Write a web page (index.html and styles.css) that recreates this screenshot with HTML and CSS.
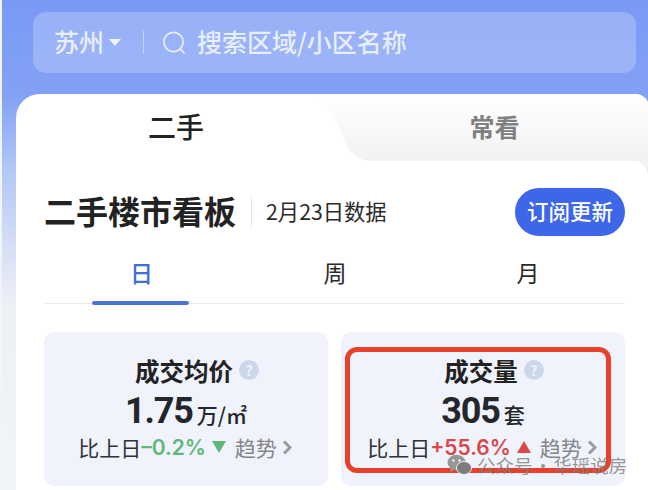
FILE: index.html
```html
<!DOCTYPE html>
<html lang="zh-CN">
<head>
    <meta charset="UTF-8">
    <title>二手楼市看板</title>
    <link rel="stylesheet" href="styles.css">
</head>
<body>
    <div class="search-bar">
        <div class="city">苏州<span class="caret"></span></div>
        <div class="search-divider"></div>
        <svg class="search-icon" width="24" height="24" viewBox="0 0 24 24" fill="none" stroke="#e6edfd" stroke-width="1.8" stroke-linecap="round">
            <circle cx="11.5" cy="11" r="9.6"/>
            <path d="M18.5 18.2 22 22"/>
        </svg>
        <div class="search-text">搜索区域/小区名称</div>
    </div>

    <div class="card">
        <svg class="tab-shape" width="332" height="92" viewBox="0 0 332 92">
            <defs>
                <linearGradient id="tabFill" x1="0" y1="0" x2="0" y2="1">
                    <stop offset="0" stop-color="#ffffff"/>
                    <stop offset="1" stop-color="#f2f2f4"/>
                </linearGradient>
            </defs>
            <path d="M0 0H318Q328 0 332 8V67H58C40 67 33 58 27 42C21 28 10 10 0 0Z" fill="url(#tabFill)"/>
            <path d="M322 67H332V81Q330 71 322 67Z" fill="#f2f2f4"/>
        </svg>
        <div class="tab-row">
            <div class="tab tab-active">二手</div>
            <div class="tab tab-other">常看</div>
        </div>

        <div class="board-head">
            <h1 class="board-title">二手楼市看板</h1>
            <div class="board-date">2月23日数据</div>
            <button class="subscribe-btn">订阅更新</button>
        </div>

        <div class="period-tabs">
            <div class="period period-active">日</div>
            <div class="period">周</div>
            <div class="period">月</div>
        </div>

        <div class="stat-grid">
            <div class="stat">
                <div class="stat-title">成交均价<span class="help">?</span></div>
                <div class="stat-value">1.75<span class="stat-unit">万/㎡</span></div>
                <div class="stat-row">
                    <span>比上日</span><span class="down">–0.2%</span><span class="tri tri-down"></span>
                    <span class="trend">趋势</span>
                    <svg class="chevron" width="10" height="15" viewBox="0 0 10 15" fill="none" stroke="#9a9a9e" stroke-width="3"><path d="M2 1.500 8 7.500 2 13.500"/></svg>
                </div>
            </div>
            <div class="stat">
                <div class="stat-title">成交量<span class="help">?</span></div>
                <div class="stat-value">305<span class="stat-unit">套</span></div>
                <div class="stat-row">
                    <span>比上日</span><span class="up">+55.6%</span><span class="tri tri-up"></span>
                    <span class="trend">趋势</span>
                    <svg class="chevron" width="10" height="15" viewBox="0 0 10 15" fill="none" stroke="#9a9a9e" stroke-width="3"><path d="M2 1.500 8 7.500 2 13.500"/></svg>
                </div>
                <div class="highlight"></div>
            </div>
        </div>
    </div>

    <div class="watermark">
        <svg width="25" height="22" viewBox="0 0 25 22">
            <ellipse cx="9.500" cy="8.500" rx="9" ry="7.800" fill="#979797"/>
            <path d="M4 13 3 18 8.500 15Z" fill="#979797"/>
            <circle cx="6.500" cy="6.500" r="1.200" fill="#eef1fb"/>
            <circle cx="12.500" cy="6.500" r="1.200" fill="#eef1fb"/>
            <ellipse cx="17" cy="14" rx="7.500" ry="6.500" fill="#7c7c7c" stroke="#eef1fb" stroke-width="1"/>
        </svg>
        <span>公众号 · 华瑶说房</span>
    </div>
</body>
</html>
```

FILE: styles.css
```css
* {
    margin: 0;
    padding: 0;
    box-sizing: border-box;
}

html, body {
    height: 490px;
    overflow: hidden;
}

body {
    position: relative;
    font-family: "Noto Sans CJK SC", "Noto Sans", sans-serif;
    background: linear-gradient(180deg, #7a99f5 0%, #83a2f5 20%, #b3c8f5 35%, #eef0f6 62%, #f3f4f8 100%);
    border-left: 2px solid #f2f4fb;
    color: #222;
}

.search-bar {
    display: flex;
    align-items: center;
    height: 61px;
    margin: 12px 12px 21px 31px;
    padding-left: 21px;
    border-radius: 13px;
    background: rgba(255, 255, 255, 0.22);
    color: #e8eefd;
}

.city {
    display: flex;
    align-items: center;
    padding-bottom: 3px;
    font-size: 25px;
    font-weight: 500;
}

.caret {
    width: 0;
    height: 0;
    margin-left: 5px;
    margin-top: 3px;
    border-left: 6px solid transparent;
    border-right: 6px solid transparent;
    border-top: 7px solid #eef3fe;
}

.search-divider {
    width: 1px;
    height: 23px;
    margin: 0 18px 0 22px;
    background: #c6d5fa;
}

.search-icon {
    flex-shrink: 0;
}

.search-text {
    margin-left: 11px;
    padding-bottom: 3px;
    font-size: 25px;
    font-weight: 500;
}

.card {
    position: relative;
    height: 420px;
    margin-left: 14px;
    padding: 0 23px 0 28px;
    background: #fff;
    border-radius: 24px 12px 0 0;
}

.tab-row {
    position: relative;
    display: flex;
    height: 67px;
    margin-left: -28px;
    margin-right: -23px;
    padding-bottom: 4px;
}

.tab {
    display: flex;
    align-items: center;
    justify-content: center;
}

.tab-active {
    width: 320px;
    font-size: 28px;
    font-weight: 500;
    color: #222;
}

.tab-other {
    flex: 1;
    padding-left: 5px;
    font-size: 25px;
    font-weight: 700;
    color: #808080;
}

.tab-shape {
    position: absolute;
    top: 0;
    right: 0;
}

.board-head {
    display: flex;
    align-items: center;
    height: 48px;
    margin-top: 27px;
}

.board-title {
    padding-right: 15px;
    padding-bottom: 4px;
    font-size: 32px;
    font-weight: 700;
    line-height: 26px;
    border-right: 1px solid #e2e4e8;
    color: #222;
}

.board-date {
    margin-left: 14px;
    padding-bottom: 4px;
    font-size: 21.300px;
    color: #2a2a2a;
}

.subscribe-btn {
    width: 110px;
    height: 48px;
    margin-left: auto;
    padding-bottom: 4px;
    border: none;
    border-radius: 24px;
    background: #3d66e8;
    color: #fff;
    font-family: inherit;
    font-size: 21.500px;
    font-weight: 500;
}

.period-tabs {
    display: grid;
    grid-template-columns: 195px 192px 1fr;
    height: 68px;
    border-bottom: 1px solid #e8eaee;
    font-size: 23px;
    color: #2a2a2a;
}

.period {
    padding-top: 16px;
    text-align: center;
    line-height: 40px;
}

.period-active {
    position: relative;
    color: #3f6fd8;
    font-weight: 500;
}

.period-active::after {
    content: "";
    position: absolute;
    left: 48px;
    bottom: -2px;
    width: 97px;
    height: 4px;
    border-radius: 2px;
    background: #4a76d8;
}

.stat-grid {
    display: grid;
    grid-template-columns: 284px 284px;
    gap: 13px;
    margin-top: 28px;
}

.stat {
    position: relative;
    display: flex;
    flex-direction: column;
    align-items: center;
    height: 154px;
    padding-top: 20px;
    border-radius: 10px;
    background: #f0f3fc;
}

.stat-title {
    display: flex;
    align-items: center;
    height: 36px;
    margin-left: -4px;
    font-size: 24.500px;
    font-weight: 700;
    color: #222;
}

.help {
    display: flex;
    align-items: center;
    justify-content: center;
    width: 20px;
    height: 20px;
    margin-left: 6px;
    margin-right: -26px;
    border-radius: 50%;
    background: #cdd7ec;
    color: #f0f3fc;
    font-size: 14px;
    font-weight: 700;
}

.stat-value {
    display: flex;
    align-items: baseline;
    height: 44px;
    margin-top: 1px;
    font-family: "Roboto", "Noto Sans", sans-serif;
    font-size: 36px;
    font-weight: 700;
    line-height: 44px;
    letter-spacing: -1.200px;
    color: #23262b;
}

.stat-unit {
    margin-left: 4px;
    font-family: "Noto Sans CJK SC", sans-serif;
    font-size: 21px;
    font-weight: 500;
    letter-spacing: 0;
}

.stat-row {
    display: flex;
    align-items: center;
    height: 34px;
    margin-top: -3px;
    margin-left: -2px;
    font-size: 21px;
    color: #2f3136;
}

.down, .up {
    font-family: "Inter", "Noto Sans", sans-serif;
    font-weight: 600;
    font-size: 21px;
}

.down {
    color: #5fb878;
}

.up {
    color: #d9474a;
}

.tri {
    width: 0;
    height: 0;
    margin-left: 6px;
    border-left: 7px solid transparent;
    border-right: 7px solid transparent;
}

.tri-down {
    border-top: 12px solid #5fb878;
}

.tri-up {
    border-bottom: 12px solid #d9474a;
}

.trend {
    margin-left: 9px;
    color: #85868a;
}

.chevron {
    margin-left: 5px;
}

.highlight {
    position: absolute;
    top: 15px;
    left: 4px;
    width: 266px;
    height: 126px;
    border: 5px solid #e8402a;
    border-radius: 12px;
}

.watermark {
    position: absolute;
    top: 452px;
    left: 445px;
    display: flex;
    align-items: center;
    gap: 5px;
    font-size: 18.500px;
    word-spacing: -3px;
    white-space: nowrap;
    color: rgba(125, 125, 125, 0.8);
}
```
